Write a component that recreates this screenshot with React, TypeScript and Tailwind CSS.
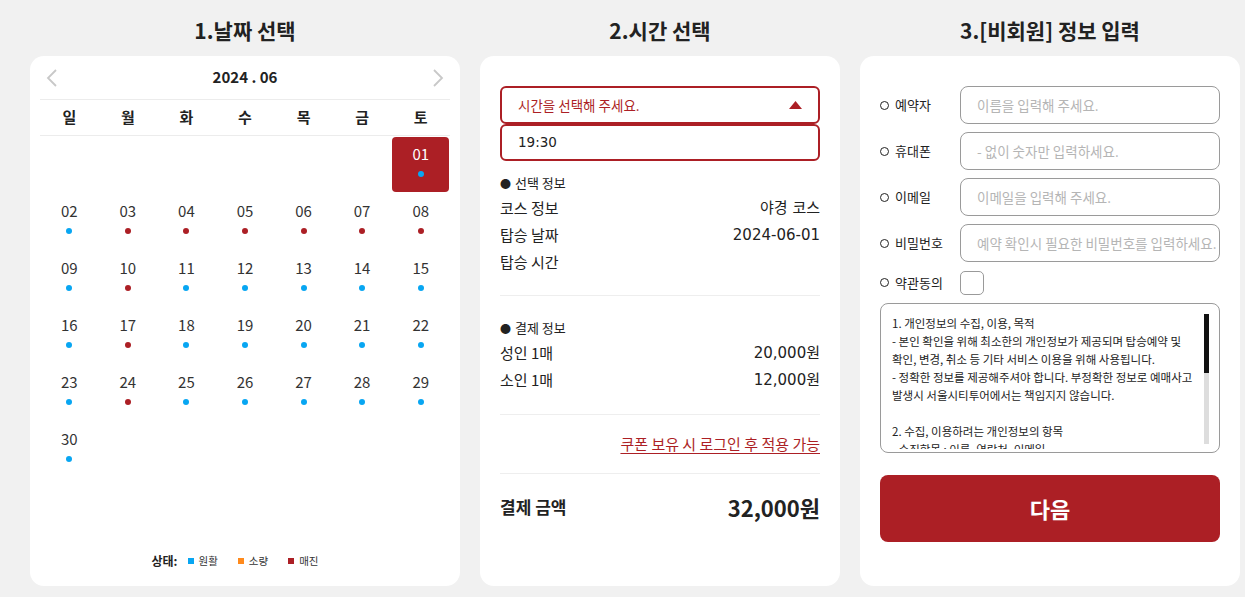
import React from "react";

const RED = "#ac1f25";

type Day = { d: string; dot: "b" | "r" } | null;

const dotMap: Record<string, "b" | "r"> = {
  "01": "b", "02": "b", "03": "r", "04": "r", "05": "r", "06": "r", "07": "r", "08": "r",
  "09": "b", "10": "r", "11": "b", "12": "b", "13": "b", "14": "b", "15": "b",
  "16": "b", "17": "r", "18": "b", "19": "b", "20": "b", "21": "b", "22": "b",
  "23": "b", "24": "r", "25": "b", "26": "b", "27": "b", "28": "b", "29": "b", "30": "b",
};

const days: Day[] = [
  null, null, null, null, null, null,
  ...Array.from({ length: 30 }, (_, i) => {
    const d = String(i + 1).padStart(2, "0");
    return { d, dot: dotMap[d] };
  }),
];

const weekdays = ["일", "월", "화", "수", "목", "금", "토"];

function Calendar() {
  return (
    <div className="flex h-[530px] w-[430px] flex-col rounded-[14px] bg-white px-[10px]">
      <div className="flex h-[44px] items-center justify-between border-b border-[#ececec] px-[6px]">
        <svg width="12" height="20" viewBox="0 0 12 20">
          <polyline points="10,2 2,10 10,18" fill="none" stroke="#c8c8c8" strokeWidth="1.8" />
        </svg>
        <span className="text-[15px] font-bold text-[#222]">2024 . 06</span>
        <svg width="12" height="20" viewBox="0 0 12 20">
          <polyline points="2,2 10,10 2,18" fill="none" stroke="#c8c8c8" strokeWidth="1.8" />
        </svg>
      </div>
      <div className="grid h-[36px] grid-cols-7 items-center border-b border-[#ececec]">
        {weekdays.map((w) => (
          <div key={w} className="text-center text-[15px] font-bold text-[#222]">
            {w}
          </div>
        ))}
      </div>
      <div className="grid grid-cols-7">
        {days.map((day, i) => (
          <div key={i} className="h-[57px] p-[1px]">
            {day && (
              <div
                className={`flex h-[55px] flex-col items-center rounded-[4px] pt-[7px] ${
                  day.d === "01" ? "bg-[#ac1f25] text-white" : "text-[#333]"
                }`}
              >
                <span className="text-[15px] leading-[20px]">{day.d}</span>
                <span
                  className={`mt-[7px] h-[6px] w-[6px] rounded-full ${
                    day.dot === "b" ? "bg-[#08a6f2]" : "bg-[#ac1f25]"
                  }`}
                />
              </div>
            )}
          </div>
        ))}
      </div>
      <div className="mt-auto flex items-center justify-center pb-[16px] pr-[20px] text-[10.5px] text-[#333]">
        <span className="mr-[10px] text-[12px] font-bold text-[#222]">상태:</span>
        <span className="mr-[5px] h-[6px] w-[6px] bg-[#08a6f2]" />
        <span className="mr-[20px]">원활</span>
        <span className="mr-[5px] h-[6px] w-[6px] bg-[#ff8a1c]" />
        <span className="mr-[20px]">소량</span>
        <span className="mr-[5px] h-[6px] w-[6px] bg-[#ac1f25]" />
        <span>매진</span>
      </div>
    </div>
  );
}

function Row({ l, r }: { l: string; r?: string }) {
  return (
    <div className="flex h-[27px] items-center justify-between text-[15px] text-[#222]">
      <span>{l}</span>
      <span className="font-['DejaVu_Sans','Noto_Sans_CJK_KR',sans-serif]">{r}</span>
    </div>
  );
}

function TimePanel() {
  return (
    <div className="flex h-[530px] w-[360px] flex-col rounded-[14px] bg-white px-[20px] pt-[30px]">
      <div className="flex h-[38px] items-center justify-between rounded-[6px] border-2 border-[#ac1f25] pl-[16px] pr-[16px]">
        <span className="text-[13.5px] text-[#ac1f25]">시간을 선택해 주세요.</span>
        <svg width="13" height="8" viewBox="0 0 13 8">
          <polygon points="6.5,0 13,8 0,8" fill={RED} />
        </svg>
      </div>
      <div className="flex h-[37px] items-center rounded-[6px] border-2 border-[#ac1f25] pl-[16px] font-['DejaVu_Sans',sans-serif] text-[13.5px] text-[#222]">
        19:30
      </div>
      <div className="mt-[12px] flex h-[20px] items-center text-[13px] text-[#222]">
        <span className="mr-[4px] text-[11px]">●</span>선택 정보
      </div>
      <div className="mt-[2px]">
        <Row l="코스 정보" r="야경 코스" />
        <Row l="탑승 날짜" r="2024-06-01" />
        <Row l="탑승 시간" />
      </div>
      <div className="mt-[19px] border-t border-[#eeeeee]" />
      <div className="mt-[22px] flex h-[20px] items-center text-[13px] text-[#222]">
        <span className="mr-[4px] text-[11px]">●</span>결제 정보
      </div>
      <div className="mt-[2px]">
        <Row l="성인 1매" r="20,000원" />
        <Row l="소인 1매" r="12,000원" />
      </div>
      <div className="mt-[20px] border-t border-[#eeeeee]" />
      <div className="mt-[18px] flex h-[20px] justify-end text-[15px] text-[#ac1f25] underline underline-offset-[3px]">
        쿠폰 보유 시 로그인 후 적용 가능
      </div>
      <div className="mt-[20px] border-t border-[#eeeeee]" />
      <div className="mt-[18px] flex h-[30px] items-center justify-between text-[#222]">
        <span className="text-[17px] font-bold">결제 금액</span>
        <span className="text-[22px] font-bold">32,000원</span>
      </div>
    </div>
  );
}

function Label({ text }: { text: string }) {
  return (
    <span className="flex w-[80px] items-center text-[13px] text-[#222]">
      <span className="mr-[6px] h-[9px] w-[9px] rounded-full border border-[#222]" />
      {text}
    </span>
  );
}

function Field({ label, ph }: { label: string; ph: string }) {
  return (
    <div className="flex h-[38px] items-center">
      <Label text={label} />
      <div className="flex h-[38px] w-[260px] items-center overflow-hidden whitespace-nowrap rounded-[8px] border border-[#9a9a9a] pl-[16px] pr-[16px] text-[13.5px] text-[#b5b5b5]">
        {ph}
      </div>
    </div>
  );
}

const terms = [
  "1. 개인정보의 수집, 이용, 목적",
  "- 본인 확인을 위해 최소한의 개인정보가 제공되며 탑승예약 및",
  "확인, 변경, 취소 등 기타 서비스 이용을 위해 사용됩니다.",
  "- 정확한 정보를 제공해주셔야 합니다. 부정확한 정보로 예매사고",
  "발생시 서울시티투어에서는 책임지지 않습니다.",
  "",
  "2. 수집, 이용하려는 개인정보의 항목",
  "- 수집항목 : 이름, 연락처, 이메일",
];

function InfoPanel() {
  return (
    <div className="flex h-[530px] w-[380px] flex-col gap-[8px] rounded-[14px] bg-white px-[20px] pt-[30px]">
      <Field label="예약자" ph="이름을 입력해 주세요." />
      <Field label="휴대폰" ph="- 없이 숫자만 입력하세요." />
      <Field label="이메일" ph="이메일을 입력해 주세요." />
      <Field label="비밀번호" ph="예약 확인시 필요한 비밀번호를 입력하세요." />
      <div className="flex h-[25px] items-center">
        <Label text="약관동의" />
        <div className="h-[24px] w-[24px] rounded-[5px] border border-[#9a9a9a]" />
      </div>
      <div className="flex h-[150px] items-start rounded-[8px] border border-[#9a9a9a] pl-[11px] pr-[10px] pt-[10px]">
        <div className="h-[135px] flex-1 overflow-hidden text-[11.5px] leading-[18px] text-[#222]">
          {terms.map((t, i) => (
            <div key={i} className="h-[18px] whitespace-nowrap">
              {t}
            </div>
          ))}
        </div>
        <div className="flex h-[130px] w-[5px] flex-col bg-[#dddddd]">
          <div className="h-[59px] bg-[#111]" />
        </div>
      </div>
      <div className="mt-[14px] flex h-[67px] items-center justify-center rounded-[8px] bg-[#ac1f25] text-[22px] font-bold text-white">
        다음
      </div>
    </div>
  );
}

export default function App() {
  return (
    <div className="h-[597px] w-[1245px] bg-[#f1f1f1] pl-[30px] font-['Noto_Sans_CJK_KR','Noto_Sans',sans-serif]">
      <div className="flex gap-[20px]">
        {[
          { t: "1.날짜 선택", w: "w-[430px]", c: <Calendar /> },
          { t: "2.시간 선택", w: "w-[360px]", c: <TimePanel /> },
          { t: "3.[비회원] 정보 입력", w: "w-[380px]", c: <InfoPanel /> },
        ].map((col) => (
          <div key={col.t} className={`flex flex-col ${col.w}`}>
            <h2 className="flex h-[56px] items-center justify-center pt-[6px] text-[21px] font-bold text-[#222]">
              {col.t}
            </h2>
            {col.c}
          </div>
        ))}
      </div>
    </div>
  );
}
